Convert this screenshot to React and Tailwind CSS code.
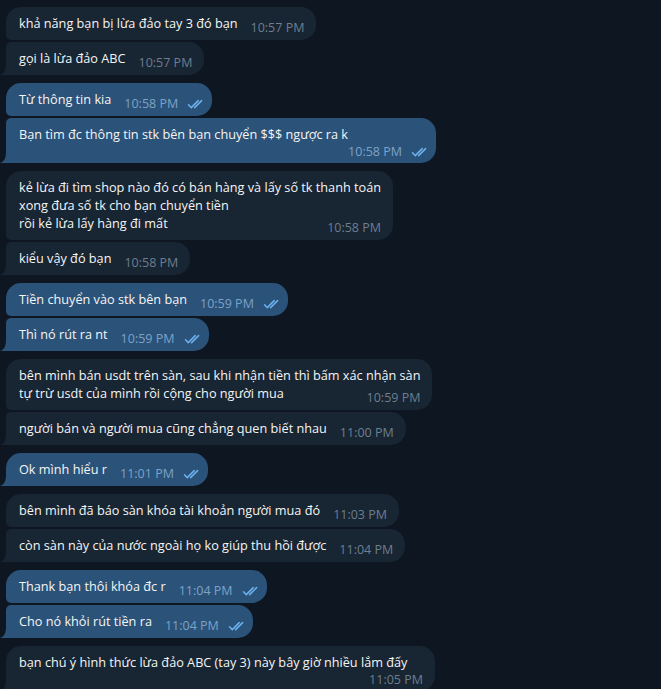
import React from 'react';

const groups = [
  {
    out: false,
    msgs: [
      { lines: ['khả năng bạn bị lừa đảo tay 3 đó bạn'], time: '10:57 PM' },
      { lines: ['gọi là lừa đảo ABC'], time: '10:57 PM' },
    ],
  },
  {
    out: true,
    msgs: [
      { lines: ['Từ thông tin kia'], time: '10:58 PM' },
      { lines: ['Bạn tìm đc thông tin stk bên bạn chuyển $$$ ngược ra k'], time: '10:58 PM', below: true, wide: 'w-[430px]' },
    ],
  },
  {
    out: false,
    msgs: [
      {
        lines: [
          'kẻ lừa đi tìm shop nào đó có bán hàng và lấy số tk thanh toán',
          'xong đưa số tk cho bạn chuyển tiền',
          'rồi kẻ lừa lấy hàng đi mất',
        ],
        time: '10:58 PM',
      },
      { lines: ['kiểu vậy đó bạn'], time: '10:58 PM' },
    ],
  },
  {
    out: true,
    msgs: [
      { lines: ['Tiền chuyển vào stk bên bạn'], time: '10:59 PM' },
      { lines: ['Thì nó rút ra nt'], time: '10:59 PM' },
    ],
  },
  {
    out: false,
    msgs: [
      {
        lines: [
          'bên mình bán usdt trên sàn, sau khi nhận tiền thì bấm xác nhận sàn',
          'tự trừ usdt của mình rồi cộng cho người mua',
        ],
        time: '10:59 PM',
      },
      { lines: ['người bán và người mua cũng chẳng quen biết nhau'], time: '11:00 PM' },
    ],
  },
  {
    out: true,
    msgs: [{ lines: ['Ok mình hiểu r'], time: '11:01 PM' }],
  },
  {
    out: false,
    msgs: [
      { lines: ['bên mình đã báo sàn khóa tài khoản người mua đó'], time: '11:03 PM' },
      { lines: ['còn sàn này của nước ngoài họ ko giúp thu hồi được'], time: '11:04 PM' },
    ],
  },
  {
    out: true,
    msgs: [
      { lines: ['Thank bạn thôi khóa đc r'], time: '11:04 PM' },
      { lines: ['Cho nó khỏi rút tiền ra'], time: '11:04 PM' },
    ],
  },
  {
    out: false,
    msgs: [
      { lines: ['bạn chú ý hình thức lừa đảo ABC (tay 3) này bây giờ nhiều lắm đấy'], time: '11:05 PM', below: true, wide: 'w-[429px]' },
    ],
  },
];

function Checks() {
  return (
    <svg width="18" height="10" viewBox="0 0 18 10" fill="none" stroke="currentColor" strokeWidth="1.5" strokeLinecap="round" strokeLinejoin="round">
      <path d="M1.5 5.8 L4.3 8.6 L11.2 1.6" />
      <path d="M7.6 8.6 L14.6 1.6" />
    </svg>
  );
}

function Tail({ out }) {
  return (
    <svg className="absolute -left-[6px] bottom-0" width="6" height="11" viewBox="0 0 6 11">
      <path d="M6 0 L6 11 L0 11 C3 10 6 7.5 6 0 Z" fill={out ? '#2b5278' : '#182533'} />
    </svg>
  );
}

function Time({ msg, out }) {
  return (
    <span
      className={
        out
          ? 'flex shrink-0 items-center gap-[9px] text-[12.5px] leading-[14px] text-[#7da2c8] whitespace-nowrap'
          : 'flex shrink-0 items-center text-[12.5px] leading-[14px] text-[#6d7f8f] whitespace-nowrap'
      }
    >
      {msg.time}
      {out && (
        <span className="text-[#6cb1ef]">
          <Checks />
        </span>
      )}
    </span>
  );
}

function Bubble({ msg, out, pos }) {
  const corners =
    pos === 'only'
      ? 'rounded-tl-[15px] rounded-bl-none'
      : pos === 'first'
      ? 'rounded-tl-[15px] rounded-bl-[5px]'
      : 'rounded-tl-[5px] rounded-bl-none';
  const last = msg.lines[msg.lines.length - 1];

  return (
    <div
      className={`relative ${msg.wide || 'w-fit'} max-w-[430px] rounded-r-[15px] ${corners} ${
        out ? 'bg-[#2b5278] pr-[7px]' : 'bg-[#182533] pr-[12px]'
      } pl-[13px] pt-[7px] ${msg.below ? 'pb-[4px]' : 'pb-[8px]'}`}
    >
      {msg.below ? (
        <>
          {msg.lines.map((l, i) => (
            <div key={i} className="leading-[18px] whitespace-nowrap">{l}</div>
          ))}
          <div className="mt-[2px] flex justify-end">
            <Time msg={msg} out={out} />
          </div>
        </>
      ) : (
        <>
          {msg.lines.slice(0, -1).map((l, i) => (
            <div key={i} className="leading-[18px] whitespace-nowrap">{l}</div>
          ))}
          <div className="flex items-end justify-between gap-[13px]">
            <span className="leading-[18px] whitespace-nowrap">{last}</span>
            <span className="relative top-[3px]">
              <Time msg={msg} out={out} />
            </span>
          </div>
        </>
      )}
      {(pos === 'only' || pos === 'last') && <Tail out={out} />}
    </div>
  );
}

export default function App() {
  return (
    <div className="h-[689px] overflow-hidden bg-[#0e1621] font-['Open_Sans',sans-serif] text-[12.7px] text-[#f5f5f5]">
      <div className="flex flex-col gap-[8px] px-[6px] pt-[7px]">
        {groups.map((g, gi) => (
          <div key={gi} className="flex flex-col gap-[2px]">
            {g.msgs.map((m, mi) => {
              const pos =
                g.msgs.length === 1 ? 'only' : mi === 0 ? 'first' : mi === g.msgs.length - 1 ? 'last' : 'mid';
              return <Bubble key={mi} msg={m} out={g.out} pos={pos} />;
            })}
          </div>
        ))}
      </div>
    </div>
  );
}
